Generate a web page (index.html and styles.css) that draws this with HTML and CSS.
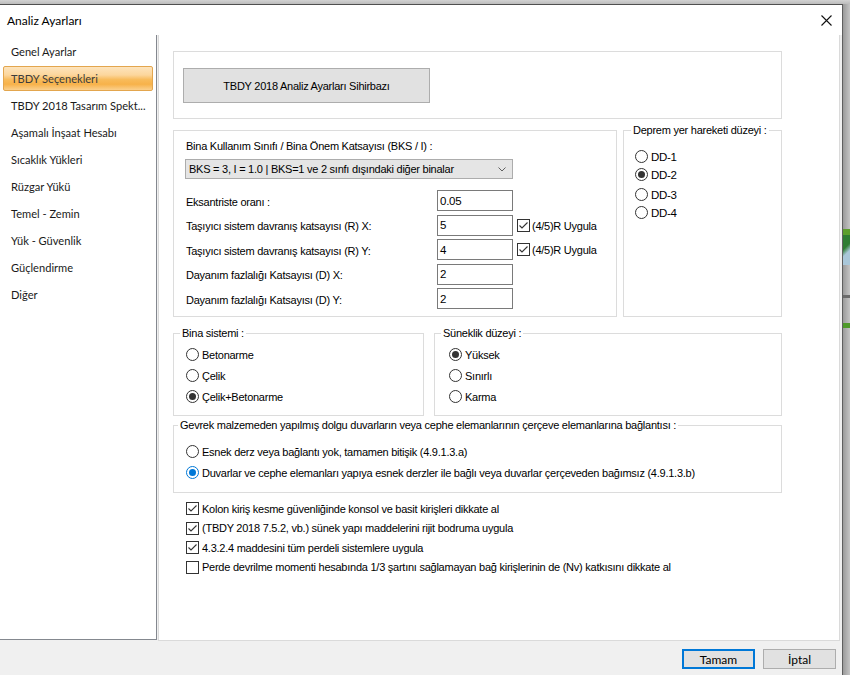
FILE: index.html
```html
<!DOCTYPE html>
<html lang="tr">
<head>
<meta charset="utf-8">
<title>Analiz Ayarları</title>
<link rel="stylesheet" href="styles.css">
</head>
<body>
<div class="screen">
  <div class="desk-top"></div>
  <div class="screen-row">
    <div class="window">
      <div class="titlebar">
        <span class="title">Analiz Ayarları</span>
        <span class="close"><svg width="11" height="11" viewBox="0 0 11 11"><path d="M0.5 0.5 L10.5 10.5 M10.5 0.5 L0.5 10.5" stroke="#111" stroke-width="1.1" fill="none"/></svg></span>
      </div>
      <div class="main">
        <nav class="sidebar">
          <div class="nav-item">Genel Ayarlar</div>
          <div class="nav-item active">TBDY Seçenekleri</div>
          <div class="nav-item">TBDY 2018 Tasarım Spekt...</div>
          <div class="nav-item">Aşamalı İnşaat Hesabı</div>
          <div class="nav-item">Sıcaklık Yükleri</div>
          <div class="nav-item">Rüzgar Yükü</div>
          <div class="nav-item">Temel - Zemin</div>
          <div class="nav-item">Yük - Güvenlik</div>
          <div class="nav-item">Güçlendirme</div>
          <div class="nav-item">Diğer</div>
        </nav>
        <div class="panel">
          <div class="group top-group">
            <div class="wizard">TBDY 2018 Analiz Ayarları Sihirbazı</div>
          </div>
          <div class="row2">
            <div class="group bks">
              <div class="bks-label">Bina Kullanım Sınıfı / Bina Önem Katsayısı (BKS / I) :</div>
              <div class="select">
                <span>BKS = 3, I = 1.0 | BKS=1 ve 2 sınfı dışındaki diğer binalar</span>
                <svg class="chev" width="8" height="5" viewBox="0 0 8 5"><path d="M0.5 0.5 L4 4 L7.5 0.5" stroke="#606060" fill="none" stroke-width="1"/></svg>
              </div>
              <div class="frows">
                <div class="frow"><span class="flabel">Eksantriste oranı :</span><span class="input">0.05</span></div>
                <div class="frow"><span class="flabel">Taşıyıcı sistem davranış katsayısı (R) X:</span><span class="input">5</span>
                  <span class="cbox"><svg width="13" height="13" viewBox="0 0 13 13"><rect x="0.5" y="0.5" width="12" height="12" fill="#fff" stroke="#333"/><path d="M2.5 6.5 L5 9 L10.5 3.5" stroke="#333" stroke-width="1.1" fill="none"/></svg></span><span class="ctext">(4/5)R Uygula</span></div>
                <div class="frow"><span class="flabel">Taşıyıcı sistem davranış katsayısı (R) Y:</span><span class="input">4</span>
                  <span class="cbox"><svg width="13" height="13" viewBox="0 0 13 13"><rect x="0.5" y="0.5" width="12" height="12" fill="#fff" stroke="#333"/><path d="M2.5 6.5 L5 9 L10.5 3.5" stroke="#333" stroke-width="1.1" fill="none"/></svg></span><span class="ctext">(4/5)R Uygula</span></div>
                <div class="frow"><span class="flabel">Dayanım fazlalığı Katsayısı (D) X:</span><span class="input">2</span></div>
                <div class="frow"><span class="flabel">Dayanım fazlalığı Katsayısı (D) Y:</span><span class="input">2</span></div>
              </div>
            </div>
            <div class="group deprem">
              <div class="gtitle">Deprem yer hareketi düzeyi :</div>
              <div class="radios dd">
                <div class="radio"><span class="rc"></span><span>DD-1</span></div>
                <div class="radio"><span class="rc on"></span><span>DD-2</span></div>
                <div class="radio"><span class="rc"></span><span>DD-3</span></div>
                <div class="radio"><span class="rc"></span><span>DD-4</span></div>
              </div>
            </div>
          </div>
          <div class="row3">
            <div class="group bina">
              <div class="gtitle">Bina sistemi :</div>
              <div class="radios r3">
                <div class="radio"><span class="rc"></span><span>Betonarme</span></div>
                <div class="radio"><span class="rc"></span><span>Çelik</span></div>
                <div class="radio"><span class="rc on"></span><span>Çelik+Betonarme</span></div>
              </div>
            </div>
            <div class="group suneklik">
              <div class="gtitle">Süneklik düzeyi :</div>
              <div class="radios r3">
                <div class="radio"><span class="rc on"></span><span>Yüksek</span></div>
                <div class="radio"><span class="rc"></span><span>Sınırlı</span></div>
                <div class="radio"><span class="rc"></span><span>Karma</span></div>
              </div>
            </div>
          </div>
          <div class="group gevrek">
            <div class="gtitle">Gevrek malzemeden yapılmış dolgu duvarların veya cephe elemanlarının çerçeve elemanlarına bağlantısı :</div>
            <div class="radios r2">
              <div class="radio"><span class="rc"></span><span>Esnek derz veya bağlantı yok, tamamen bitişik (4.9.1.3.a)</span></div>
              <div class="radio"><span class="rc on blue"></span><span>Duvarlar ve cephe elemanları yapıya esnek derzler ile bağlı veya duvarlar çerçeveden bağımsız (4.9.1.3.b)</span></div>
            </div>
          </div>
          <div class="checks">
            <div class="check"><svg width="13" height="13" viewBox="0 0 13 13"><rect x="0.5" y="0.5" width="12" height="12" fill="#fff" stroke="#333"/><path d="M2.5 6.5 L5 9 L10.5 3.5" stroke="#333" stroke-width="1.1" fill="none"/></svg><span>Kolon kiriş kesme güvenliğinde konsol ve basit kirişleri dikkate al</span></div>
            <div class="check"><svg width="13" height="13" viewBox="0 0 13 13"><rect x="0.5" y="0.5" width="12" height="12" fill="#fff" stroke="#333"/><path d="M2.5 6.5 L5 9 L10.5 3.5" stroke="#333" stroke-width="1.1" fill="none"/></svg><span>(TBDY 2018 7.5.2, vb.) sünek yapı maddelerini rijit bodruma uygula</span></div>
            <div class="check"><svg width="13" height="13" viewBox="0 0 13 13"><rect x="0.5" y="0.5" width="12" height="12" fill="#fff" stroke="#333"/><path d="M2.5 6.5 L5 9 L10.5 3.5" stroke="#333" stroke-width="1.1" fill="none"/></svg><span>4.3.2.4 maddesini tüm perdeli sistemlere uygula</span></div>
            <div class="check"><svg width="13" height="13" viewBox="0 0 13 13"><rect x="0.5" y="0.5" width="12" height="12" fill="#fff" stroke="#333"/></svg><span>Perde devrilme momenti hesabında 1/3 şartını sağlamayan bağ kirişlerinin de (Nv) katkısını dikkate al</span></div>
          </div>
        </div>
      </div>
      <div class="footer">
        <div class="btn primary">Tamam</div>
        <div class="btn">İptal</div>
      </div>
    </div>
    <div class="desk-right">
      <div class="d1"></div>
      <div class="d2"></div>
      <div class="d3"></div>
      <div class="d4"></div>
      <div class="d5"></div>
      <div class="d6"></div>
      <div class="d7"></div>
    </div>
  </div>
</div>
</body>
</html>
```

FILE: styles.css
```css
* { box-sizing: border-box; }
body {
  margin: 0;
  font-family: "Liberation Sans", Arial, sans-serif;
  font-size: 11px;
  letter-spacing: -0.25px;
  color: #000;
}
.screen {
  width: 850px;
  height: 675px;
  display: flex;
  flex-direction: column;
  background: #b9b9b9;
  overflow: hidden;
}
.desk-top {
  height: 4px;
  flex: none;
  background: linear-gradient(#d2d2d2, #bcbcbc);
}
.screen-row {
  display: flex;
  height: 671px;
}
.window {
  width: 843px;
  height: 671px;
  flex: none;
  border-top: 1px solid #4f4f4f;
  border-right: 1px solid #5f5f5f;
  background: #f0f0f0;
  display: flex;
  flex-direction: column;
}
.titlebar {
  height: 30px;
  flex: none;
  background: #fff;
  display: flex;
  align-items: center;
  justify-content: space-between;
  padding: 0 10px 0 7px;
}
.title {
  font-family: Lato, "Noto Sans", sans-serif;
  font-size: 12px;
  letter-spacing: 0;
  color: #000;
  margin-top: 1px;
}
.close {
  display: flex;
}
.main {
  height: 606px;
  flex: none;
  display: flex;
  align-items: flex-start;
}
.sidebar {
  width: 157px;
  height: 605px;
  background: #fff;
  border-right: 1px solid #84888f;
  border-bottom: 1px solid #84888f;
  padding-top: 3px;
  display: flex;
  flex-direction: column;
  font-family: Lato, "Noto Sans", sans-serif;
  font-size: 11.1px;
  letter-spacing: 0;
  color: #1a1a1a;
}
.nav-item {
  height: 25px;
  flex: none;
  margin: 1px 3px;
  padding-left: 7px;
  display: flex;
  align-items: center;
  white-space: nowrap;
  border: 1px solid transparent;
}
.nav-item.active {
  border-color: #e3a64e;
  border-radius: 2px;
  color: #3c3c3c;
  background: linear-gradient(#fde4bd 0%, #fcd69c 35%, #f8bb5b 55%, #f7b24a 75%, #fbd08d 100%);
}
.panel {
  margin-left: 1px;
  width: 682px;
  height: 606px;
  background: #fff;
  border: 1px solid #dadada;
  border-top: none;
  padding: 16px 57px 0 14px;
  display: flex;
  flex-direction: column;
}
.group {
  border: 1px solid #dcdcdc;
  background: #fff;
}
.gtitle {
  display: table;
  background: #fff;
  padding: 0 2px;
  margin-top: -7px;
  line-height: 13px;
  height: 13px;
  white-space: nowrap;
}
.top-group {
  height: 68px;
  padding: 16px 0 0 9px;
  flex: none;
}
.wizard {
  width: 247px;
  height: 35px;
  background: #e1e1e1;
  border: 1px solid #adadad;
  display: flex;
  align-items: center;
  justify-content: center;
}
.row2 {
  margin-top: 11px;
  display: flex;
  gap: 6px;
  flex: none;
}
.bks {
  width: 444px;
  height: 187px;
  padding: 9px 0 0 11px;
}
.bks-label {
  line-height: 13px;
  padding-left: 1px;
}
.select {
  margin-top: 6px;
  width: 328px;
  height: 20px;
  background: #e5e5e5;
  border: 1px solid #acacac;
  display: flex;
  align-items: center;
  justify-content: space-between;
  padding: 0 6px 0 3px;
}
.chev { display: block; }
.frows {
  margin-top: 11px;
  display: flex;
  flex-direction: column;
  gap: 3.5px;
}
.frow {
  height: 21px;
  display: flex;
  align-items: center;
}
.flabel {
  width: 252px;
  padding: 2px 0 0 1px;
}
.input {
  width: 76px;
  height: 21px;
  border: 1px solid #7a7a7a;
  padding: 0 0 0 2px;
  display: flex;
  align-items: center;
  font-size: 11.5px;
}
.cbox {
  margin-left: 4px;
  display: flex;
}
.ctext {
  margin-left: 2px;
  padding-top: 1px;
}
.deprem {
  width: 159px;
  height: 187px;
}
.deprem .gtitle { margin-left: 7px; }
.radios {
  display: flex;
  flex-direction: column;
}
.radio {
  height: 13px;
  display: flex;
  align-items: center;
  white-space: nowrap;
}
.rc {
  width: 13px;
  height: 13px;
  border: 1px solid #333;
  border-radius: 50%;
  background: #fff;
  margin-right: 3px;
  display: flex;
  align-items: center;
  justify-content: center;
  flex: none;
}
.rc.on::after {
  content: "";
  width: 7px;
  height: 7px;
  border-radius: 50%;
  background: #333;
}
.rc.blue { border-color: #0078d7; }
.rc.blue::after { background: #0078d7; }
.dd {
  padding-left: 11px;
  margin-top: 13px;
  font-size: 11.5px;
  letter-spacing: -0.3px;
}
.dd .radio:nth-child(2) { margin-top: 5px; }
.dd .radio:nth-child(3) { margin-top: 7px; }
.dd .radio:nth-child(4) { margin-top: 5px; }
.row3 {
  margin-top: 16px;
  display: flex;
  gap: 10px;
  flex: none;
}
.bina, .suneklik {
  height: 83px;
}
.bina { width: 251px; }
.suneklik { width: 348px; }
.bina .gtitle, .suneklik .gtitle { margin-left: 6px; }
.r3 {
  margin-top: 8px;
  gap: 8px;
}
.bina .r3 { padding-left: 12px; }
.suneklik .r3 { padding-left: 14px; }
.gevrek {
  margin-top: 9px;
  height: 68px;
  flex: none;
}
.gevrek .gtitle { margin-left: 4px; }
.r2 {
  margin-top: 13px;
  padding-left: 12px;
  gap: 8px;
}
.checks {
  margin-top: 9px;
  padding-left: 13px;
  display: flex;
  flex-direction: column;
  gap: 6.5px;
}
.check {
  height: 13px;
  display: flex;
  align-items: center;
  white-space: nowrap;
}
.check svg {
  display: block;
  margin-right: 3px;
  flex: none;
}
.footer {
  flex: 1;
  display: flex;
  justify-content: flex-end;
  align-items: flex-start;
  gap: 8px;
  padding: 8px 6px 0 0;
}
.btn {
  width: 73px;
  height: 20px;
  background: #e1e1e1;
  border: 1px solid #adadad;
  display: flex;
  align-items: center;
  justify-content: center;
  font-family: Lato, "Noto Sans", sans-serif;
  font-size: 12px;
  letter-spacing: 0;
  color: #000;
}
.btn.primary {
  border: 2px solid #0078d7;
}
.desk-right {
  flex: 1;
  display: flex;
  flex-direction: column;
  background: linear-gradient(90deg, #9a9a9a, #c4c4c4);
}
.d1 { height: 225px; }
.d2 { height: 6px; background: #5c9f2c; }
.d3 { height: 30px; background: linear-gradient(135deg, #2e7d32 40%, #a9c7d9 60%); }
.d4 { height: 30px; }
.d5 { height: 3px; background: #6b6b6b; }
.d6 { height: 25px; }
.d7 { height: 5px; background: #4f9a2a; }
```
